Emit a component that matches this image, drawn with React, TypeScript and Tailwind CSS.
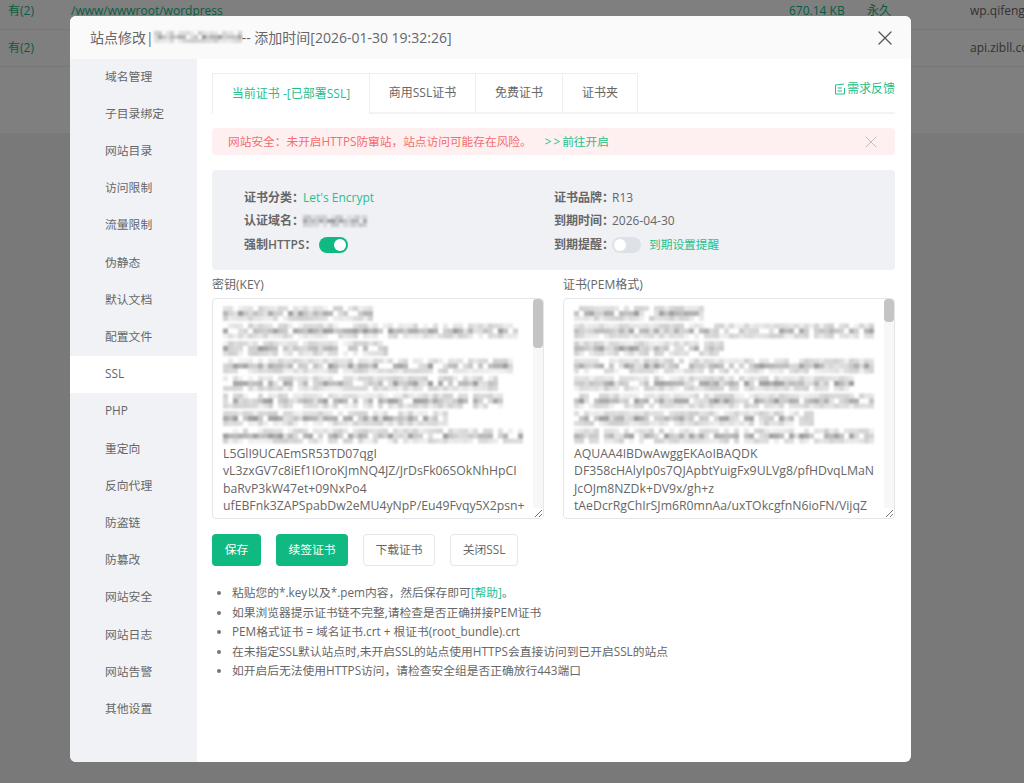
import { X } from "lucide-react";

const sideItems = [
  "域名管理", "子目录绑定", "网站目录", "访问限制", "流量限制", "伪静态", "默认文档", "配置文件", "SSL",
  "PHP", "重定向", "反向代理", "防盗链", "防篡改", "网站安全", "网站日志", "网站告警", "其他设置",
];

const tabs = [
  { label: "当前证书 -[已部署SSL]", w: "w-[158px]", active: true },
  { label: "商用SSL证书", w: "w-[106px]" },
  { label: "免费证书", w: "w-[87px]" },
  { label: "证书夹", w: "w-[75px]" },
];

const tips = [
  "如果浏览器提示证书链不完整,请检查是否正确拼接PEM证书",
  "PEM格式证书 = 域名证书.crt + 根证书(root_bundle).crt",
  "在未指定SSL默认站点时,未开启SSL的站点使用HTTPS会直接访问到已开启SSL的站点",
  "如开启后无法使用HTTPS访问，请检查安全组是否正确放行443端口",
];

// pixelated block standing in for the censored text
function Mosaic({ lines, seed, width, height, lineGap = 17.5, cell = 5 }: { lines: number[]; seed: number; width: number; height: number; lineGap?: number; cell?: number }) {
  let s = seed;
  const next = () => {
    s = (s * 9301 + 49297) % 233280;
    return s / 233280;
  };
  const rects: { x: number; y: number; o: number }[] = [];
  lines.forEach((len, i) => {
    for (let r = 0; r < 3; r++) {
      for (let x = 0; x < len; x += cell) {
        const v = next();
        const strength = r === 1 ? 0.5 : 0.24;
        if (v > 0.14) rects.push({ x, y: i * lineGap + r * cell, o: strength * (0.2 + v) });
      }
    }
  });
  return (
    <svg width={width} height={height} className="block blur-[1px]">
      {rects.map((c, i) => (
        <rect key={i} x={c.x} y={c.y} width={cell} height={cell} fill="#555" opacity={c.o} />
      ))}
    </svg>
  );
}

function CertBox({ label, lines, seed, text, thumb }: { label: string; lines: number[]; seed: number; text: string[]; thumb: string }) {
  return (
    <div>
      <div className="h-[22px] text-xs leading-[18px] text-[#666]">{label}</div>
      <div className="relative h-[221px] overflow-hidden rounded-sm border border-[#e4e6ea] pt-[7px] pl-[10px]">
        <Mosaic lines={lines} seed={seed} width={310} height={139} />
        <div className="text-[12.25px] leading-[17.4px] whitespace-nowrap text-[#666]">
          {text.map((t) => (
            <div key={t}>{t}</div>
          ))}
        </div>
        <div className="absolute top-0 right-0 bottom-0 w-[10px] bg-[#f7f7f7]">
          <div className={`w-full rounded-sm bg-[#c4c4c4] ${thumb}`} />
        </div>
        <svg width="10" height="10" className="absolute right-0 bottom-0 bg-white">
          <path d="M2 9 L9 2 M6 9 L9 6" stroke="#777" strokeWidth="1" />
        </svg>
      </div>
    </div>
  );
}

function Toggle({ on }: { on?: boolean }) {
  return (
    <div className={`flex h-[16px] w-[29px] items-center rounded-full px-[2px] ${on ? "justify-end bg-[#10b981]" : "justify-start bg-[#dfe1e8]"}`}>
      <div className="h-[12px] w-[12px] rounded-full bg-white" />
    </div>
  );
}

export default function App() {
  return (
    <div className="relative h-[783px] w-[1024px] overflow-hidden bg-[#f2f2f2] font-['Open_Sans','Noto_Sans_CJK_SC',sans-serif] text-xs text-[#666]">
      {/* page behind the dialog */}
      <div className="h-[133px] bg-white text-[12px]">
        <div className="flex h-[30px] items-center border-b border-[#eee] pb-[8px]">
          <span className="w-[71px] shrink-0 pl-2 text-[#10b981]">有(2)</span>
          <span className="w-[718px] shrink-0 text-[#10b981]">/www/wwwroot/wordpress</span>
          <span className="w-[78px] shrink-0 text-[#10b981]">670.14 KB</span>
          <span className="w-[103px] shrink-0 text-[#10b981]">永久</span>
          <span className="whitespace-nowrap">wp.qifeng</span>
        </div>
        <div className="flex h-[37px] items-center border-b border-[#eee]">
          <span className="w-[970px] shrink-0 pl-2 text-[#10b981]">有(2)</span>
          <span className="whitespace-nowrap">api.zibll.co</span>
        </div>
      </div>

      <div className="absolute inset-0 bg-black/50" />

      {/* dialog */}
      <div className="absolute top-[16px] left-[70px] h-[746px] w-[841px] overflow-hidden rounded-md bg-white">
        <div className="flex h-[43px] items-center justify-between bg-[#fafafa] pr-[14px] pl-[20px]">
          <div className="flex items-center text-sm text-[#666]">
            <span>站点修改|</span>
            <Mosaic lines={[86]} seed={17} width={88} height={13} cell={4} />
            <span>-- 添加时间[2026-01-30 19:32:26]</span>
          </div>
          <X className="h-6 w-6 text-[#555]" strokeWidth={1.3} />
        </div>

        <div className="flex h-[703px]">
          <div className="w-[127px] bg-[#f1f2f6]">
            <div className="-mt-px">
              {sideItems.map((item) => (
                <div key={item} className={`flex h-[37.2px] items-center pl-[35px] text-[11.8px] ${item === "SSL" ? "bg-white" : ""}`}>
                  {item}
                </div>
              ))}
            </div>
          </div>

          <div className="flex-1 pt-[14px] pr-[16px] pl-[15px]">
            {/* tabs */}
            <div className="flex h-[41px] items-start justify-between border-b-2 border-[#f3f3f3]">
              <div className="flex h-[41px]">
                {tabs.map((t) => (
                  <div
                    key={t.label}
                    className={`flex items-center justify-center border-t border-r border-[#eceef0] text-xs first:border-l ${t.w} ${t.active ? "h-[41px] bg-white text-[#1fc08c]" : "h-[39px]"}`}
                  >
                    {t.label}
                  </div>
                ))}
              </div>
              <div className="flex items-center gap-[1px] pt-[8px] text-xs text-[#1fc08c]">
                <svg width="12" height="12" viewBox="0 0 12 12" fill="none" stroke="#1fc08c" strokeWidth="1">
                  <path d="M1.5 2 L10 1 M1.5 2 V11 H10.5 V5 M3.5 5 H8 M3.5 8 H8" />
                </svg>
                <span>需求反馈</span>
              </div>
            </div>

            {/* warning */}
            <div className="mt-[14px] flex h-[27px] items-center justify-between rounded-sm bg-[#fef0f0] pr-[14px] pl-[16px] text-[11.7px] text-[#f56c6c]">
              <div>
                网站安全：未开启HTTPS防窜站，站点访问可能存在风险。
                <span className="ml-[13px] text-[#1fc08c]">
                  <span className="tracking-[2px]">&gt;&gt;</span>前往开启
                </span>
              </div>
              <X className="h-5 w-5 text-[#b4b4b4]" strokeWidth={1} />
            </div>

            {/* cert info */}
            <div className="mt-[15px] grid h-[100px] grid-cols-[310px_1fr] content-center gap-y-[5px] rounded-sm bg-[#f0f1f5] pt-[2px] pl-[32px] text-xs">
              <div className="flex h-[18.5px] items-center">
                <span className="w-[59px] font-semibold whitespace-nowrap">证书分类：</span>
                <span className="text-[#1fc08c]">Let's Encrypt</span>
              </div>
              <div className="flex h-[18.5px] items-center">
                <span className="w-[58px] font-semibold whitespace-nowrap">证书品牌：</span>
                <span>R13</span>
              </div>
              <div className="flex h-[18.5px] items-center">
                <span className="w-[59px] font-semibold whitespace-nowrap">认证域名：</span>
                <Mosaic lines={[64]} seed={41} width={66} height={13} cell={4} />
              </div>
              <div className="flex h-[18.5px] items-center">
                <span className="w-[58px] font-semibold whitespace-nowrap">到期时间：</span>
                <span>2026-04-30</span>
              </div>
              <div className="flex h-[18.5px] items-center">
                <span className="w-[75px] font-semibold whitespace-nowrap">强制HTTPS：</span>
                <Toggle on />
              </div>
              <div className="flex h-[18.5px] items-center">
                <span className="w-[58px] font-semibold whitespace-nowrap">到期提醒：</span>
                <Toggle />
                <span className="ml-2 text-[11.7px] text-[#1fc08c]">到期设置提醒</span>
              </div>
            </div>

            {/* key + cert */}
            <div className="mt-[6px] grid grid-cols-[332px_332px] gap-x-[19px]">
              <CertBox
                label="密钥(KEY)"
                seed={7}
                thumb="h-[49px]"
                lines={[150, 292, 165, 290, 275, 280, 225, 298]}
                text={[
                  "L5GlI9UCAEmSR53TD07qgI",
                  "vL3zxGV7c8iEf1IOroKJmNQ4JZ/JrDsFk06SOkNhHpCI",
                  "baRvP3kW47et+09NxPo4",
                  "ufEBFnk3ZAPSpabDw2eMU4yNpP/Eu49Fvqy5X2psn+",
                  "5A+dsnUKJTEkf0wRPP8wsw90",
                ]}
              />
              <CertBox
                label="证书(PEM格式)"
                seed={23}
                thumb="h-[23px]"
                lines={[130, 298, 150, 298, 280, 298, 240, 298]}
                text={[
                  "AQUAA4IBDwAwggEKAoIBAQDK",
                  "DF358cHAlyIp0s7QJApbtYuigFx9ULVg8/pfHDvqLMaN",
                  "JcOJm8NZDk+DV9x/gh+z",
                  "tAeDcrRgChIrSJm6R0mnAa/uxTOkcgfnN6ioFN/VijqZ",
                  "5cEwoC4NATS1AHHXUhK+B0",
                ]}
              />
            </div>

            {/* buttons */}
            <div className="mt-[15px] flex gap-[15px] text-[11.8px]">
              <div className="flex h-[32px] w-[49px] items-center justify-center rounded-sm bg-[#10b981] text-white">保存</div>
              <div className="flex h-[32px] w-[72px] items-center justify-center rounded-sm bg-[#10b981] text-white">续签证书</div>
              <div className="flex h-[32px] w-[72px] items-center justify-center rounded-sm border border-[#e4e6ea]">下载证书</div>
              <div className="flex h-[32px] w-[68px] items-center justify-center rounded-sm border border-[#e4e6ea]">关闭SSL</div>
            </div>

            {/* tips */}
            <ul className="mt-[17px] list-disc pl-[20px] text-[11.75px] leading-[19.5px] marker:text-[#777]">
              <li>
                粘贴您的*.key以及*.pem内容，然后保存即可<span className="text-[#1fc08c]">[帮助]</span>。
              </li>
              {tips.map((t) => (
                <li key={t}>{t}</li>
              ))}
            </ul>
          </div>
        </div>
      </div>
    </div>
  );
}
